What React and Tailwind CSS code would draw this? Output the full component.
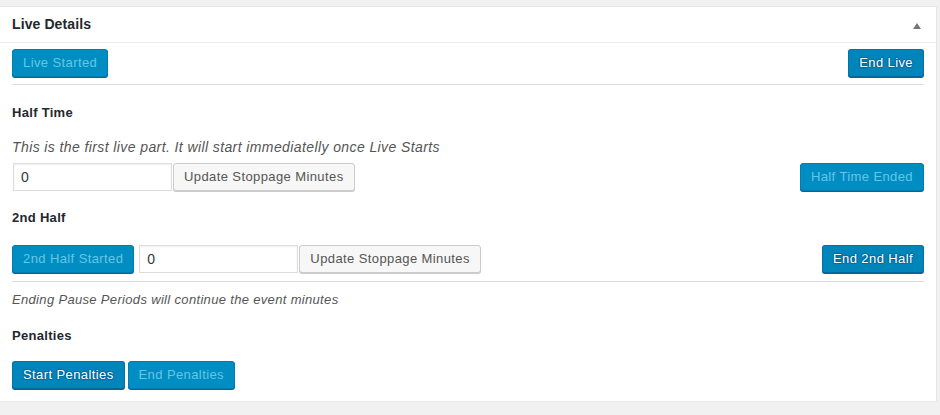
import React from "react";

const font = { fontFamily: '"Liberation Sans", Arial, sans-serif' };

function Primary({ children, disabled, className = "" }) {
  return (
    <button
      className={
        "h-[28px] px-[10px] pb-[1px] rounded-[3px] border text-[13px] tracking-[0.4px] leading-[26px] whitespace-nowrap " +
        (disabled
          ? "bg-[#008ec2] border-[#007cb2] text-[#66c6e4] shadow-[0_1px_0_#006799] "
          : "bg-[#0085ba] border-[#0073aa] border-b-[#006799] text-white shadow-[0_1px_0_#006799] [text-shadow:0_-1px_1px_#006799,1px_0_1px_#006799,0_1px_1px_#006799,-1px_0_1px_#006799] ") +
        className
      }
    >
      {children}
    </button>
  );
}

function Secondary({ children }) {
  return (
    <button className="h-[28px] px-[10px] pb-[1px] rounded-[3px] border border-[#cccccc] bg-[#f7f7f7] text-[#555555] text-[13px] tracking-[0.4px] leading-[26px] shadow-[0_1px_0_#cccccc] whitespace-nowrap">
      {children}
    </button>
  );
}

function Input() {
  return (
    <input
      defaultValue="0"
      className="h-[28px] w-[159px] border border-[#dddddd] bg-white px-[7px] text-[14px] text-[#32373c] shadow-[inset_0_1px_2px_rgba(0,0,0,0.07)] outline-none"
      style={font}
      readOnly
    />
  );
}

export default function App() {
  return (
    <div className="w-[940px] h-[415px] bg-[#f1f1f1] pt-[6px] text-[#444444]" style={font}>
      <div className="w-[937px] bg-white border-t border-r border-[#e5e5e5] shadow-[0_1px_1px_rgba(0,0,0,0.04)]">
        <div className="h-[36px] flex items-center justify-between px-3 border-b border-[#eeeeee]">
          <h2 className="text-[14px] tracking-[0.1px] font-bold text-[#23282d]">Live Details</h2>
          <svg width="10" height="8" viewBox="0 0 10 8" className="mr-[2px] mt-[2px]">
            <polygon points="5,1 9,7 1,7" fill="#72777c" />
          </svg>
        </div>
        <div className="px-3 pb-[12px]">
          <div className="mt-[6px] flex justify-between">
            <Primary disabled>Live Started</Primary>
            <Primary>End Live</Primary>
          </div>
          <div className="mt-[7px] border-t border-[#dddddd]" />
          <h4 className="mt-[18px] text-[13px] tracking-[0.3px] leading-[19px] font-bold text-[#23282d]">Half Time</h4>
          <p className="mt-[15px] text-[14px] tracking-[0.4px] leading-[20px] italic text-[#555555]">
            This is the first live part. It will start immediatelly once Live Starts
          </p>
          <div className="mt-[6px] flex items-start justify-between">
            <div className="flex items-start pl-[1px]">
              <Input />
              <div className="ml-[1px]">
                <Secondary>Update Stoppage Minutes</Secondary>
              </div>
            </div>
            <Primary disabled>Half Time Ended</Primary>
          </div>
          <h4 className="mt-[17px] text-[13px] tracking-[0.3px] leading-[19px] font-bold text-[#23282d]">2nd Half</h4>
          <div className="mt-[18px] flex items-start justify-between">
            <div className="flex items-start">
              <Primary disabled>2nd Half Started</Primary>
              <div className="ml-[5px] flex items-start">
                <Input />
                <div className="ml-[1px]">
                  <Secondary>Update Stoppage Minutes</Secondary>
                </div>
              </div>
            </div>
            <Primary>End 2nd Half</Primary>
          </div>
          <div className="mt-[8px] border-t border-[#dddddd]" />
          <p className="mt-[8px] text-[13px] tracking-[0.33px] leading-[19px] italic text-[#555555]">
            Ending Pause Periods will continue the event minutes
          </p>
          <h4 className="mt-[17px] text-[13px] tracking-[0.3px] leading-[19px] font-bold text-[#23282d]">Penalties</h4>
          <div className="mt-[16px] flex items-start gap-[3px]">
            <Primary>Start Penalties</Primary>
            <Primary disabled>End Penalties</Primary>
          </div>
        </div>
      </div>
    </div>
  );
}
